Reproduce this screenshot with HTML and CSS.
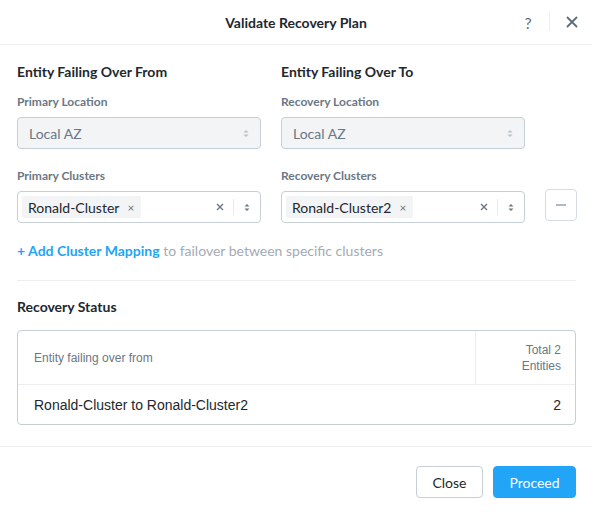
FILE: index.html
```html
<!DOCTYPE html>
<html>
<head>
<meta charset="utf-8">
<link rel="stylesheet" href="styles.css">
</head>
<body>
<div class="dialog">
  <header class="head">
    <div class="title">Validate Recovery Plan</div>
    <div class="head-actions">
      <span class="help">?</span>
      <span class="vsep"></span>
      <svg class="close-x" width="12" height="12" viewBox="0 0 12 12"><path d="M1.5 1.5L10.5 10.5M10.5 1.5L1.5 10.5" stroke="#5f6b78" stroke-width="1.8" stroke-linecap="round"/></svg>
    </div>
  </header>
  <main class="body">
    <div class="grid">
      <div class="col">
        <h3 class="sec">Entity Failing Over From</h3>
        <label class="lbl">Primary Location</label>
        <div class="select disabled"><span>Local AZ</span>
          <svg class="arrows" width="6" height="9" viewBox="0 0 6 9"><path d="M0.5 3.5L3 1L5.5 3.5ZM0.5 5.5L3 8L5.5 5.5Z" fill="#b8c0c8"/></svg>
        </div>
        <label class="lbl lbl2">Primary Clusters</label>
        <div class="select multi">
          <span class="tag">Ronald-Cluster <span class="tagx">×</span></span>
          <span class="fill"></span>
          <svg class="clr" width="8" height="8" viewBox="0 0 8 8"><path d="M1 1L7 7M7 1L1 7" stroke="#6b7785" stroke-width="1.4"/></svg>
          <span class="isep"></span>
          <svg class="arrows dark" width="6" height="9" viewBox="0 0 6 9"><path d="M0.5 3.5L3 1L5.5 3.5ZM0.5 5.5L3 8L5.5 5.5Z" fill="#6b7785"/></svg>
        </div>
      </div>
      <div class="col">
        <h3 class="sec">Entity Failing Over To</h3>
        <label class="lbl">Recovery Location</label>
        <div class="select disabled"><span>Local AZ</span>
          <svg class="arrows" width="6" height="9" viewBox="0 0 6 9"><path d="M0.5 3.5L3 1L5.5 3.5ZM0.5 5.5L3 8L5.5 5.5Z" fill="#b8c0c8"/></svg>
        </div>
        <label class="lbl lbl2">Recovery Clusters</label>
        <div class="select multi">
          <span class="tag">Ronald-Cluster2 <span class="tagx">×</span></span>
          <span class="fill"></span>
          <svg class="clr" width="8" height="8" viewBox="0 0 8 8"><path d="M1 1L7 7M7 1L1 7" stroke="#6b7785" stroke-width="1.4"/></svg>
          <span class="isep"></span>
          <svg class="arrows dark" width="6" height="9" viewBox="0 0 6 9"><path d="M0.5 3.5L3 1L5.5 3.5ZM0.5 5.5L3 8L5.5 5.5Z" fill="#6b7785"/></svg>
        </div>
      </div>
      <div class="col minus-col">
        <button class="minus"><span></span></button>
      </div>
    </div>
    <div class="addmap"><span class="link">+ Add Cluster Mapping</span> <span class="hint">to failover between specific clusters</span></div>
    <hr class="rule">
    <h3 class="sec sec2">Recovery Status</h3>
    <div class="table">
      <div class="tr th">
        <div class="td c1">Entity failing over from</div>
        <div class="td c2">Total 2<br>Entities</div>
      </div>
      <div class="tr">
        <div class="td c1">Ronald-Cluster to Ronald-Cluster2</div>
        <div class="td c2">2</div>
      </div>
    </div>
  </main>
  <footer class="foot">
    <button class="btn secondary">Close</button>
    <button class="btn primary">Proceed</button>
  </footer>
</div>
</body>
</html>
```
FILE: styles.css
```css
* { box-sizing: border-box; }
html, body { margin: 0; padding: 0; background: #fff; }
body { font-family: Lato, "Open Sans", sans-serif; color: #22272e; width: 592px; }
.dialog { width: 592px; }
.head { height: 45px; border-bottom: 1px solid #eceef1; display: flex; align-items: center; justify-content: center; position: relative; }
.title { font-size: 14px; font-weight: 700; color: #22272e; }
.head-actions { position: absolute; right: 14px; top: 0; height: 44px; display: flex; align-items: center; }
.help { font-size: 16px; color: #5f6b78; width: 10px; text-align: center; }
.vsep { width: 1px; height: 18px; background: #eceef1; margin: 0 16px 0 16px; }
.close-x { display: block; }
.body { padding: 18px 16px 0 17px; }
.grid { display: grid; grid-template-columns: 244px 244px 32px; column-gap: 20px; }
.sec { margin: 0; font-size: 14px; font-weight: 700; line-height: 18px; height: 18px; }
.lbl { display: block; font-size: 12px; font-weight: 700; color: #6b7785; line-height: 14px; margin-top: 14px; margin-bottom: 8px; }
.lbl2 { margin-top: 20px; }
.select { height: 32px; border: 1px solid #c6ced6; border-radius: 4px; display: flex; align-items: center; padding: 0 11px 0 11px; font-size: 14px; }
.select.disabled { background: #f2f4f6; color: #6b7785; justify-content: space-between; }
.select.multi { padding: 0 10px 0 4px; }
.tag { background: #f2f4f6; color: #22272e; height: 22px; display: flex; align-items: center; padding: 0 7px 0 6px; border-radius: 2px; font-size: 14px; }
.tagx { font-size: 12px; color: #6b7785; margin-left: 8px; }
.fill { flex: 1; }
.clr { display: block; }
.isep { width: 1px; height: 16px; background: #e8ebee; margin: 0 10px 0 9px; }
.arrows { display: block; }
.minus-col { padding-top: 126px; }
.minus { width: 32px; height: 32px; border: 1px solid #d6dce2; border-radius: 4px; background: #fff; padding: 0; display: flex; align-items: center; justify-content: center; }
.minus span { width: 10px; height: 1.5px; background: #b0b8c1; display: block; }
.addmap { margin-top: 19px; font-size: 14px; line-height: 18px; }
.link { color: #22a5f7; font-weight: 700; }
.hint { color: #a3abb4; }
.rule { border: 0; border-top: 1px solid #eceef1; margin: 20px 0 0 0; }
.sec2 { margin-top: 17px; }
.table { margin-top: 14px; border: 1px solid #c6ced6; border-radius: 4px; font-family: "Liberation Sans", Arial, sans-serif; }
.tr { display: flex; }
.th { border-bottom: 1px solid #eceef1; height: 54px; }
.td.c1 { flex: 1; padding-left: 16px; display: flex; align-items: center; }
.td.c2 { width: 100px; padding-right: 14px; text-align: right; display: flex; align-items: center; justify-content: flex-end; }
.th .td { font-size: 12px; color: #6b7785; line-height: 16px; }
.th .c2 { border-left: 1px solid #eceef1; }
.tr:not(.th) { height: 39px; font-size: 14px; color: #22272e; }
.foot { margin-top: 21px; border-top: 1px solid #eceef1; height: 68px; display: flex; justify-content: flex-end; align-items: flex-start; padding: 19px 16px 0; gap: 10px; }
.btn { height: 32px; border-radius: 4px; font-family: Lato, sans-serif; font-size: 14px; padding: 0; }
.secondary { width: 67px; background: #fff; border: 1px solid #c6ced6; color: #22272e; }
.primary { width: 83px; background: #22a5f7; border: 1px solid #22a5f7; color: #fff; }
```
